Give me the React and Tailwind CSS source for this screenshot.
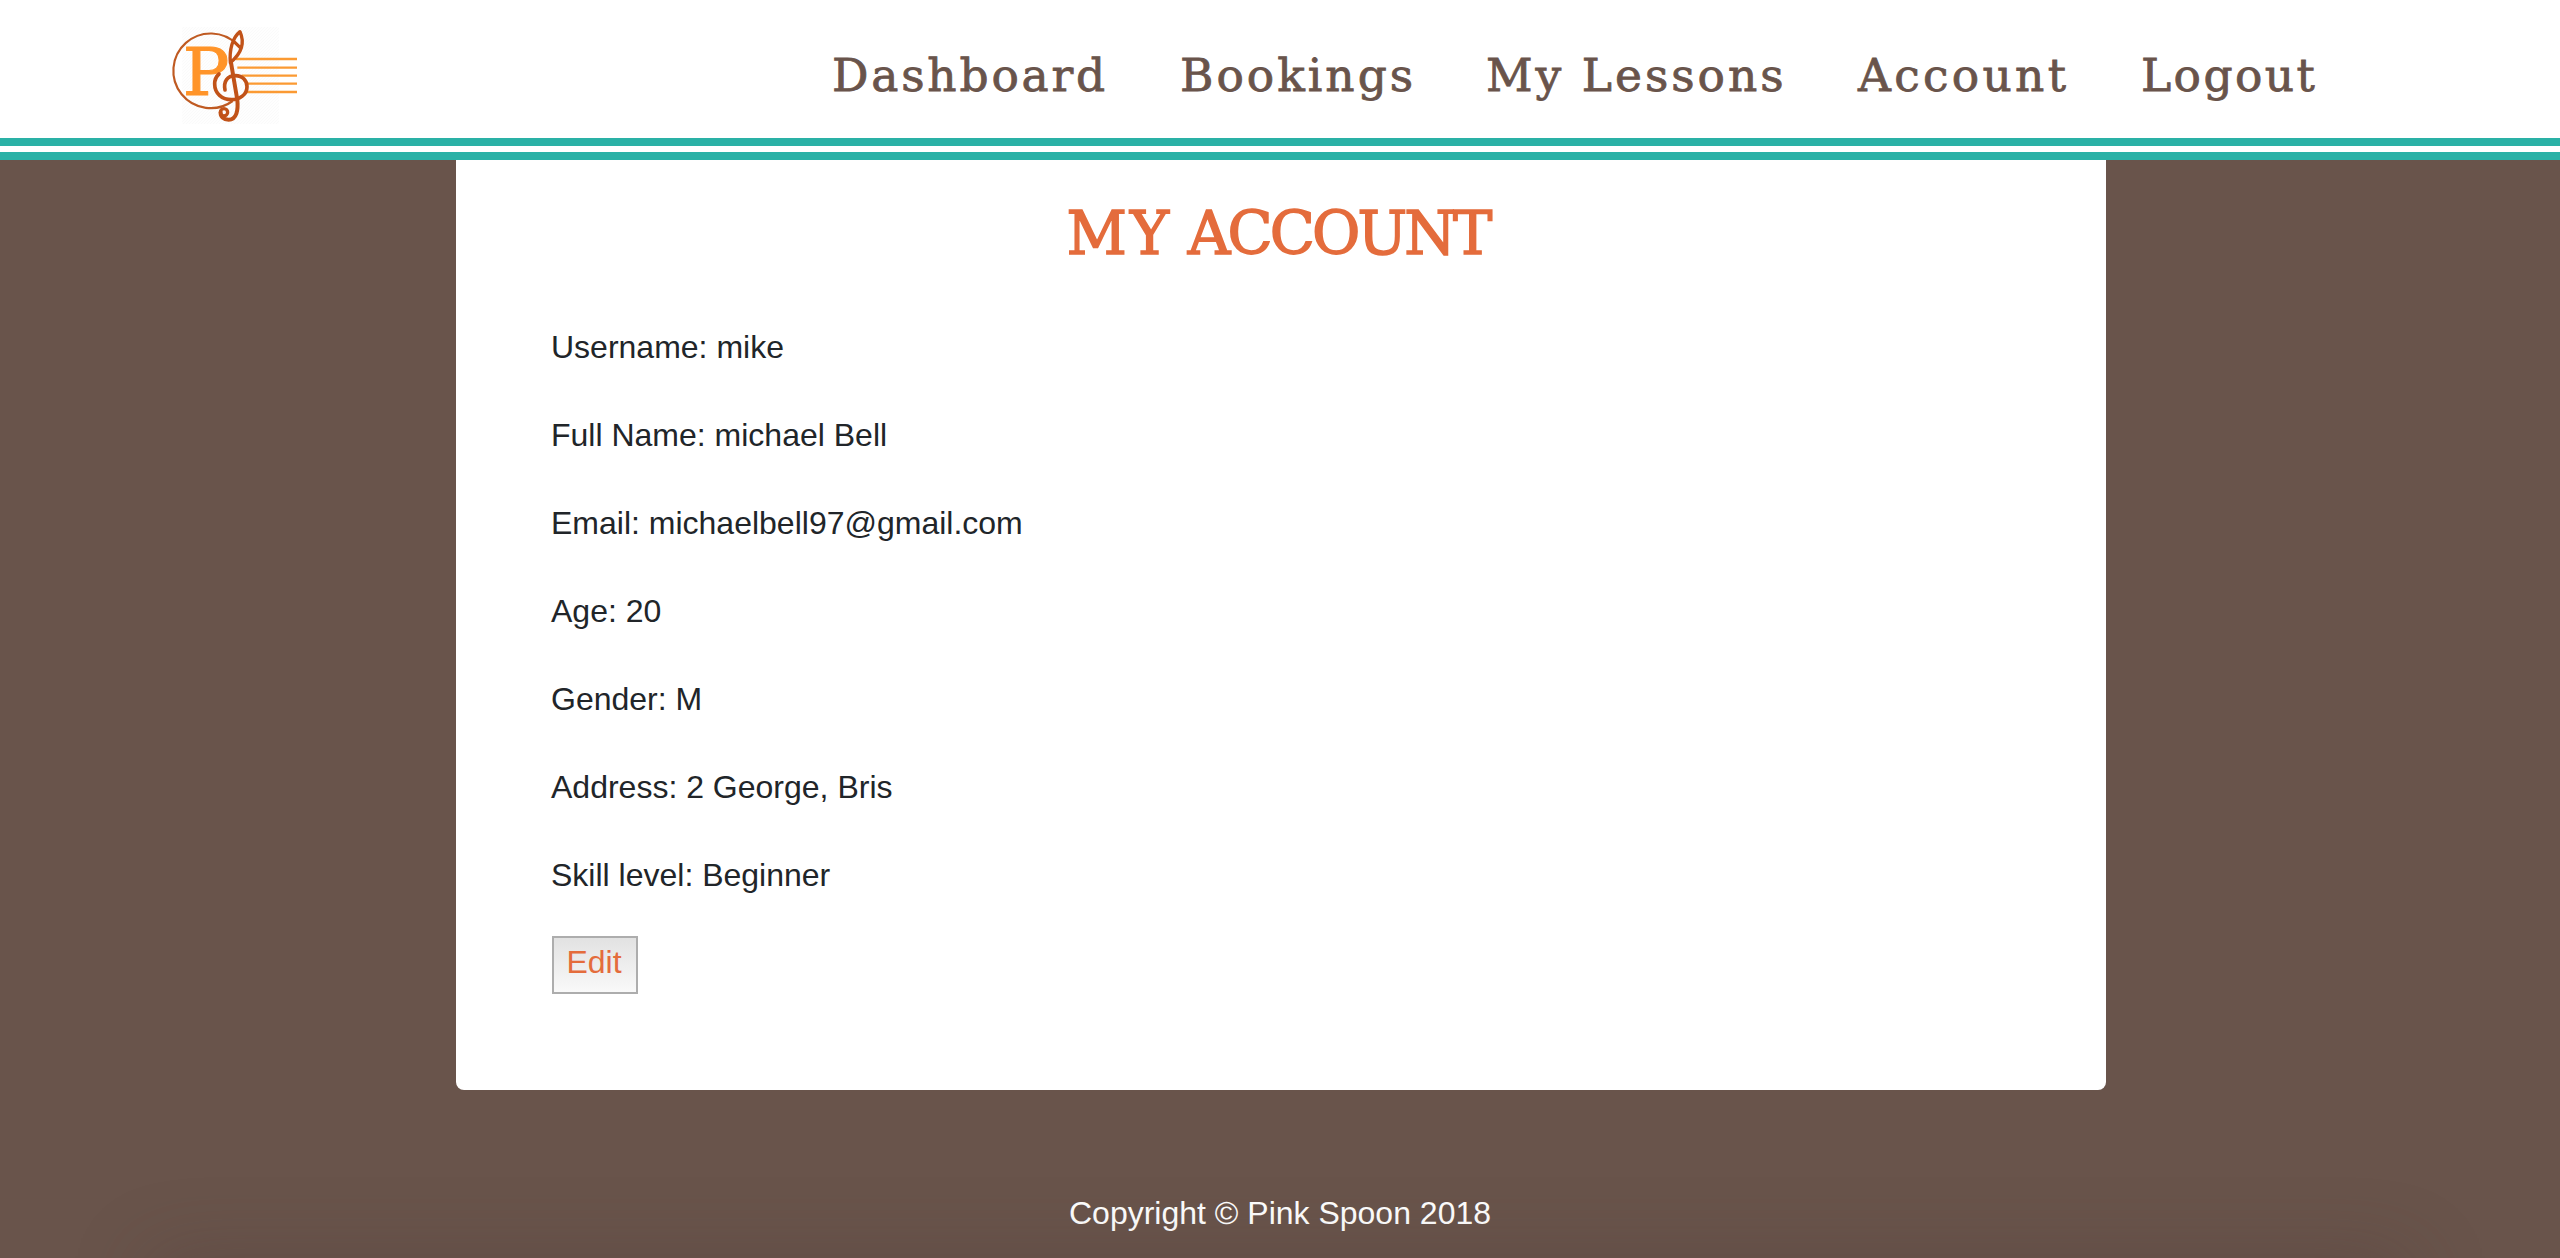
const navItems = [
  { label: "Dashboard", cls: "ml-[832px] w-[348px] tracking-[2.8px]" },
  { label: "Bookings", cls: "w-[306px] tracking-[3px]" },
  { label: "My Lessons", cls: "w-[372px] tracking-[3px]" },
  { label: "Account", cls: "w-[283px] tracking-[3.3px]" },
  { label: "Logout", cls: "tracking-[2.4px]" },
];

const details = [
  "Username: mike",
  "Full Name: michael Bell",
  "Email: michaelbell97@gmail.com",
  "Age: 20",
  "Gender: M",
  "Address: 2 George, Bris",
  "Skill level: Beginner",
];

function Logo() {
  return (
    <svg className="absolute left-[150px] top-[10px] h-[130px] w-[170px]" viewBox="0 0 510 390" fill="none">
      <defs>
        <pattern id="hatch" width="9" height="9" patternUnits="userSpaceOnUse">
          <path d="M0 9L9 0" stroke="#f8f8f8" strokeWidth="2" />
        </pattern>
      </defs>
      <rect x="97" y="51" width="290" height="291" fill="#fefefe" />
      <rect x="97" y="51" width="290" height="291" fill="url(#hatch)" />
      <g stroke="#fb9a33" strokeWidth="7">
        <path d="M258 147H441M262 173H441M275 197H441M290 221H441M290 246H441" />
      </g>
      <path d="M262 104A112 112 0 1 0 248 273" stroke="#bf5a22" strokeWidth="6.5" />
      <text x="98" y="255" fontSize="198" fill="#ff9429" stroke="#ff9429" strokeWidth="3" strokeLinejoin="round" textLength="140" lengthAdjust="spacingAndGlyphs" className="font-['DejaVu_Serif',serif] font-normal">P</text>
      <g stroke="#c15218" strokeLinecap="round" strokeLinejoin="round">
        <path d="M241 158C238 122 246 84 270 65C282 92 281 125 241 158ZM249 92L270 112" strokeWidth="10" />
        <path d="M243 158L262 270C265 300 260 329 236 329C220 329 211 319 212 307" strokeWidth="12" />
        <path d="M225 240C220 214 232 197 256 197C279 197 291 213 291 230C291 254 269 269 244 269C216 269 194 250 194 222C194 207 199 199 207 192" strokeWidth="11" />
        <circle cx="222" cy="307" r="11" strokeWidth="10" />
      </g>
    </svg>
  );
}

export default function App() {
  return (
    <div className="relative flex h-[1258px] w-[2560px] flex-col overflow-hidden bg-[#69544b] font-['Liberation_Sans',Arial,sans-serif] text-[32px] leading-[48px] text-[#212529]">
      <header className="relative h-[138px] shrink-0 bg-white">
        <Logo />
        <nav className="flex pt-[49px] font-['DejaVu_Serif',serif] text-[45.5px] leading-[53px] text-[#69544b] [-webkit-text-stroke:0.8px_#69544b]">
          {navItems.map((item) => (
            <a key={item.label} className={`shrink-0 whitespace-nowrap ${item.cls}`}>{item.label}</a>
          ))}
        </nav>
      </header>
      <div className="h-[22px] shrink-0 border-y-8 border-[#2ab1a6] bg-white" />
      <main className="ml-[456px] h-[930px] w-[1650px] shrink-0 rounded-b-lg bg-white pl-[95px]">
        <h1 className="-ml-[98px] w-[1650px] pt-[39px] text-center font-['DejaVu_Serif',serif] text-[59px] leading-[69px] tracking-[-2.9px] text-[#e46c3c] [-webkit-text-stroke:1.5px_#e46c3c]">
          <span className="tracking-[3px]">MY</span> ACCOUNT
        </h1>
        <div className="flex flex-col gap-10 pt-[55px]">
          {details.map((line) => (
            <p key={line}>{line}</p>
          ))}
        </div>
        <button className="ml-px mt-[37px] block h-[58px] w-[86px] border-2 border-[#adadad] bg-linear-to-b from-[#e2e2e2] to-[#f9f9f9] pb-[6px] pr-[2px] text-center text-[#e46c3c]">Edit</button>
      </main>
      <footer className="mt-[99px] text-center text-white">Copyright © Pink Spoon 2018</footer>
      <div className="absolute -bottom-[62px] left-[150px] right-[150px] h-[60px] shadow-[0_0_80px_rgba(70,50,50,0.27)]" />
    </div>
  );
}
